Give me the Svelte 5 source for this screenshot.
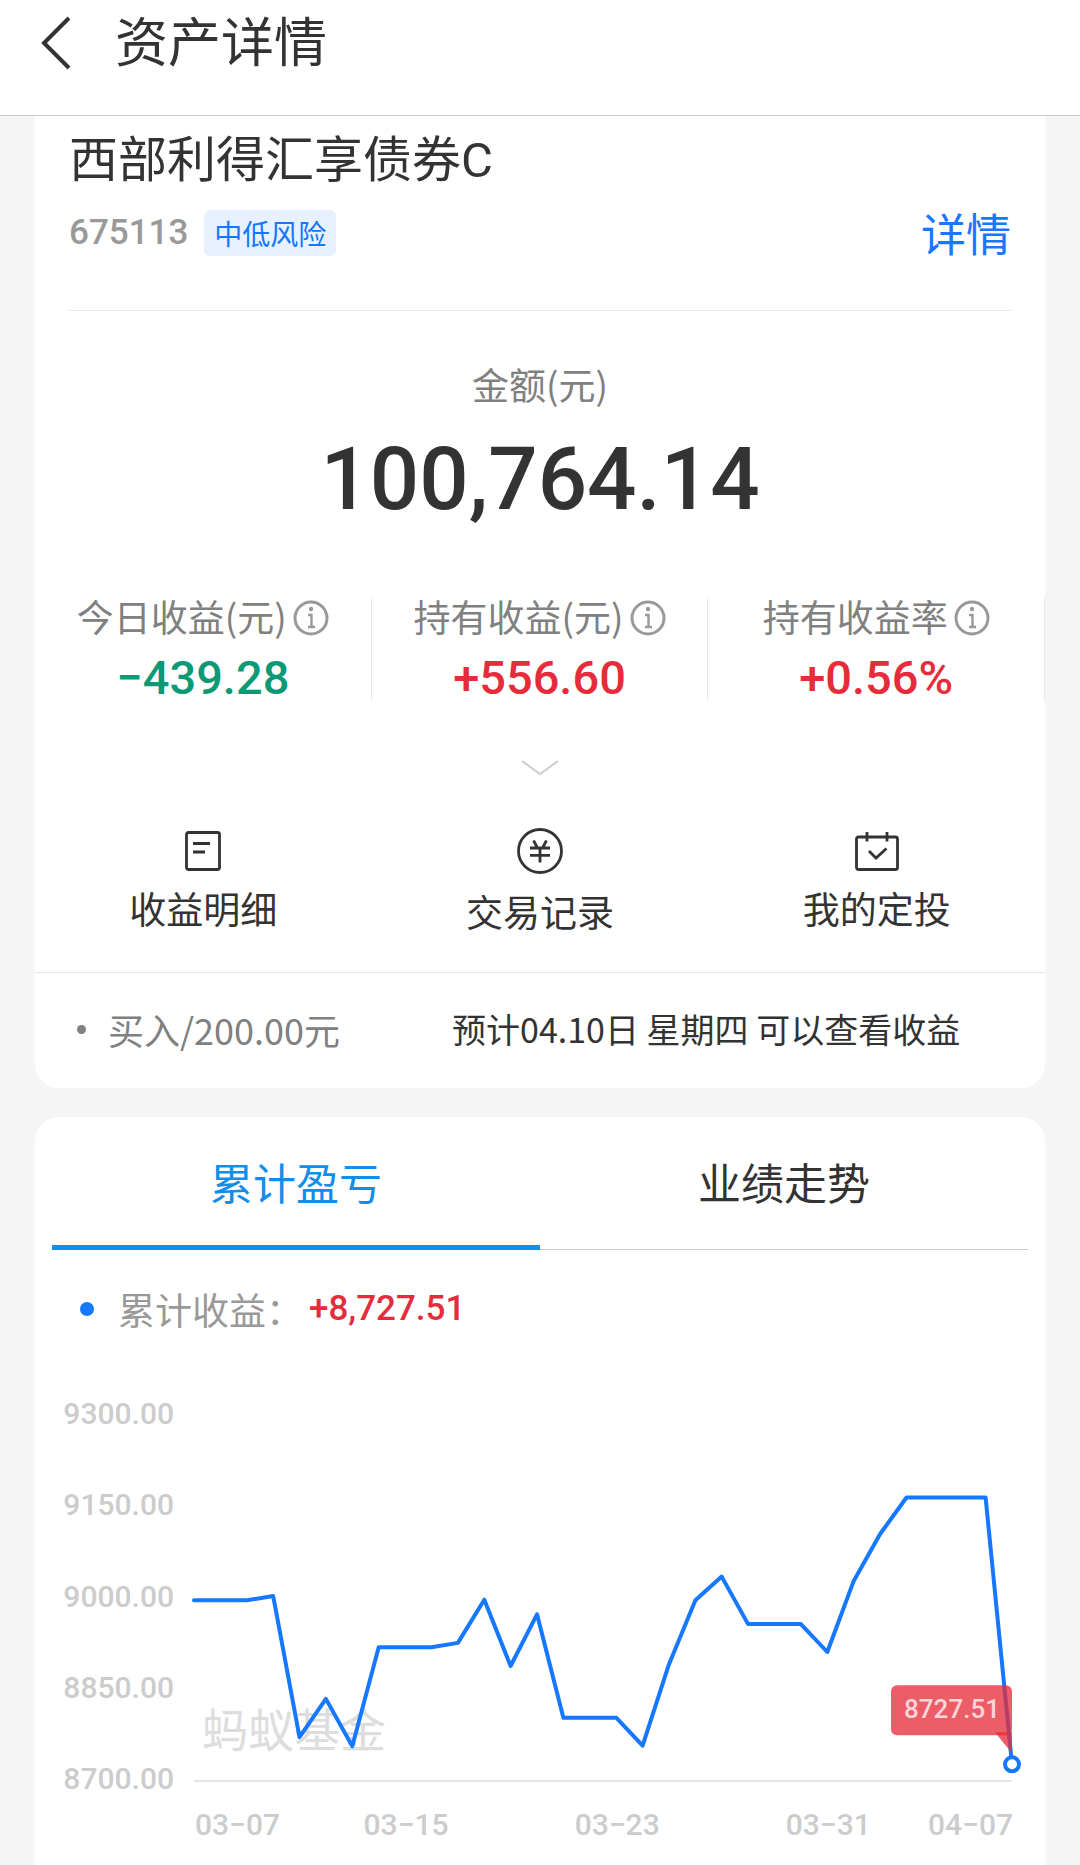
<script lang="ts">
  type Stat = { label: string; value: string; tone: "up" | "down" };

  const fund = { name: "西部利得汇享债券C", code: "675113", risk: "中低风险" };

  const stats: Stat[] = [
    { label: "今日收益(元)", value: "−439.28", tone: "down" },
    { label: "持有收益(元)", value: "+556.60", tone: "up" },
    { label: "持有收益率", value: "+0.56%", tone: "up" },
  ];

  const tabs = ["累计盈亏", "业绩走势"];
  let activeTab = $state(0);

  // one value per day, 03-07 to 04-07
  const series = [
    8997, 8997, 8997, 9004, 8772, 8835, 8757, 8920, 8920, 8920, 8927,
    8998, 8889, 8974, 8804, 8804, 8804, 8758, 8892, 8997, 9036, 8958,
    8958, 8958, 8912, 9029, 9106, 9166, 9166, 9166, 9166, 8727.51,
  ];
  const yTicks = [9300, 9150, 9000, 8850, 8700];
  const xTicks = [
    { day: 0, text: "03−07" },
    { day: 8, text: "03−15" },
    { day: 16, text: "03−23" },
    { day: 24, text: "03−31" },
    { day: 31, text: "04−07" },
  ];

  // plot area inside the 1010 x 485 view box
  const left = 159, right = 977, top = 36, bottom = 401;
  const min = 8700, max = 9300;

  const last = series.length - 1;
  const px = (i: number) => left + (i / last) * (right - left);
  const py = (v: number) => bottom - ((v - min) / (max - min)) * (bottom - top);
  const line = series.map((v, i) => `${px(i).toFixed(1)},${py(v).toFixed(1)}`).join(" ");
  const endX = px(last);
  const endY = py(series[last]);

  function anchor(day: number) {
    if (day === 0) return "start";
    return day === last ? "end" : "middle";
  }
</script>

<div class="page">
  <header class="navbar">
    <button class="back" aria-label="返回">
      <svg width="32" height="54" viewBox="0 0 32 54" fill="none" stroke="#333" stroke-width="4">
        <path d="M29 2 4 27l25 25" />
      </svg>
    </button>
    <h1>资产详情</h1>
  </header>

  <section class="card summary">
    <div class="fund">
      <h2>{fund.name}</h2>
      <div class="meta">
        <span class="code">{fund.code}</span>
        <span class="risk">{fund.risk}</span>
        <a class="detail" href="#detail">详情</a>
      </div>
    </div>

    <div class="amount">
      <div class="amount-label">金额(元)</div>
      <div class="amount-value">100,764.14</div>
    </div>

    <div class="stats">
      {#each stats as stat}
        <div class="stat">
          <div class="stat-label">
            <span>{stat.label}</span>
            <button class="info" aria-label="{stat.label}说明">
              <svg width="36" height="36" viewBox="0 0 36 36" fill="none" stroke="#999" stroke-width="2.4">
                <circle cx="18" cy="18" r="16" stroke-width="3" />
                <circle cx="18" cy="9" r="2.2" fill="#999" stroke="none" />
                <path d="M15 15h3.5v12M15 27h7" />
              </svg>
            </button>
          </div>
          <div class="stat-value {stat.tone}">{stat.value}</div>
        </div>
      {/each}
    </div>

    <button class="expand" aria-label="展开">
      <svg width="38" height="17" viewBox="0 0 38 17" fill="none" stroke="#ccc" stroke-width="2">
        <path d="m1 2 18 13L37 2" />
      </svg>
    </button>

    <nav class="actions">
      <a href="#income">
        <svg width="36" height="40" viewBox="0 0 36 40" fill="none" stroke="#333" stroke-width="2.8">
          <rect x="1.5" y="1.5" width="33" height="37" rx="2" />
          <path d="M8 12.5h17M8 21h12" />
        </svg>
        <span>收益明细</span>
      </a>
      <a href="#trades">
        <svg width="46" height="46" viewBox="0 0 46 46" fill="none" stroke="#333" stroke-width="2.8">
          <circle cx="23" cy="23" r="21.5" />
          <path d="m16.5 12.5 4 7.5M29.5 12.5l-4 7.5M13 20h20M13 27.3h20M23 20v14.5" />
        </svg>
        <span>交易记录</span>
      </a>
      <a href="#plan">
        <svg width="44" height="40" viewBox="0 0 44 40" fill="none" stroke="#333" stroke-width="2.8">
          <rect x="1.5" y="6" width="41" height="32.5" rx="2" />
          <path d="M12 1v9.5M32 1v9.5" />
          <path d="m14 20 7 7 10.5-9.5" />
        </svg>
        <span>我的定投</span>
      </a>
    </nav>

    <div class="pending">
      <span class="pending-dot"></span>
      <span class="pending-order">买入/200.00元</span>
      <span class="pending-note">预计04.10日 星期四 可以查看收益</span>
    </div>
  </section>

  <section class="card trend">
    <div class="tabs" role="tablist">
      {#each tabs as tab, i}
        <button
          role="tab"
          class:active={activeTab === i}
          aria-selected={activeTab === i}
          onclick={() => (activeTab = i)}
        >{tab}</button>
      {/each}
    </div>

    <div class="legend">
      <span class="legend-dot"></span>
      <span class="legend-label">累计收益：</span>
      <span class="legend-value">+8,727.51</span>
    </div>

    <svg class="chart" viewBox="0 0 1010 485" role="img" aria-label="累计收益走势">
      <text class="watermark" x="167" y="367">蚂蚁基金</text>

      {#each yTicks as tick}
        <text class="tick" x="139" y={py(tick) + 8} text-anchor="end">{tick.toFixed(2)}</text>
      {/each}
      {#each xTicks as tick}
        <text class="tick" x={px(tick.day) + 1} y="455" text-anchor={anchor(tick.day)}>{tick.text}</text>
      {/each}

      <line class="axis" x1={left} y1={bottom} x2={right} y2={bottom} />
      <polyline class="line" points={line} />

      <g class="tip">
        <rect x={endX - 121} y={endY - 79} width="121" height="50" rx="6" />
        <path d="M{endX - 17} {endY - 32}h17v21z" />
        <text x={endX - 60} y={endY - 46} text-anchor="middle">{series[last]}</text>
      </g>
      <circle class="marker" cx={endX} cy={endY} r="7" />
    </svg>
  </section>
</div>

<style>
  :global(body) {
    margin: 0;
    background: #f5f5f5;
  }

  .page {
    --text: #333;
    --muted: #808080;
    --blue: #1677ff;
    --tab-blue: #108ee9;
    --red: #e62c3b;
    --green: #0e9976;
    --rule: #e8e8e8;
    --font-num: Roboto, "Noto Sans CJK SC", sans-serif;

    display: flex;
    flex-direction: column;
    min-height: 100vh;
    background: #f5f5f5;
    color: var(--text);
    font-family: "Noto Sans CJK SC", sans-serif;
  }

  h1, h2 { margin: 0; font-weight: 400; }

  button {
    padding: 0;
    border: 0;
    background: none;
    color: inherit;
    font: inherit;
    cursor: pointer;
  }

  a { color: inherit; text-decoration: none; }
  svg { display: block; }

  /* navbar */
  .navbar {
    display: flex;
    align-items: center;
    gap: 43px;
    padding: 8px 40px 45px;
    border-bottom: 1px solid #c8c8c8;
    background: #fff;
  }
  .navbar h1 { font-size: 53px; line-height: 62px; }
  .back { padding-top: 8px; }

  .card { margin: 0 35px; background: #fff; }

  /* fund name */
  .summary { border-radius: 0 0 24px 24px; }
  .fund {
    margin: 0 34px;
    padding: 15px 0 54px;
    border-bottom: 1px solid var(--rule);
  }
  .fund h2 { font-family: var(--font-num); font-size: 49px; line-height: 60px; }
  .meta {
    display: flex;
    align-items: center;
    margin-top: 19px;
    line-height: 46px;
  }
  .code { color: #999; font-family: var(--font-num); font-size: 35px; font-weight: 500; }
  .risk {
    margin-left: 16px;
    padding: 0 10px;
    border-radius: 6px;
    background: #e7f1ff;
    color: var(--blue);
    font-size: 28px;
  }
  .detail { margin-left: auto; color: var(--blue); font-size: 45px; }

  /* amount */
  .amount { padding-top: 51px; text-align: center; }
  .amount-label { color: var(--muted); font-size: 37px; line-height: 44px; }
  .amount-value {
    margin-top: 23px;
    font-family: var(--font-num);
    font-size: 87px;
    font-weight: 500;
    line-height: 100px;
  }

  .stats {
    display: grid;
    grid-template-columns: repeat(3, 1fr);
    margin-top: 69px;
  }
  .stat { border-right: 1px solid var(--rule); }
  .stat-label {
    display: flex;
    justify-content: center;
    align-items: center;
    gap: 6px;
    height: 36px;
    color: var(--muted);
    font-size: 37px;
    line-height: 36px;
  }
  .info { padding-top: 4px; }
  .stat-value {
    margin-top: 21px;
    font-family: var(--font-num);
    font-size: 47px;
    font-weight: 500;
    line-height: 46px;
    text-align: center;
  }
  .up { color: var(--red); }
  .down { color: var(--green); }

  .expand { display: block; margin: 58px auto 0; }

  /* shortcuts */
  .actions {
    display: grid;
    grid-template-columns: repeat(3, 1fr);
    align-items: center;
    padding: 52px 0 39px;
    border-bottom: 1px solid var(--rule);
  }
  .actions a {
    display: flex;
    flex-direction: column;
    align-items: center;
    gap: 15px;
    font-size: 37px;
    line-height: 44px;
  }

  .pending {
    display: flex;
    align-items: center;
    padding: 32px 42px 35px;
    line-height: 48px;
    white-space: nowrap;
  }
  .pending-dot { width: 9px; height: 9px; border-radius: 50%; background: var(--muted); }
  .pending-order { margin-left: 22px; color: var(--muted); font-size: 36px; }
  .pending-note { margin-left: 112px; font-size: 34px; }

  /* trend card */
  .trend {
    flex: 1;
    margin-top: 29px;
    border-radius: 24px 24px 0 0;
  }
  .tabs {
    display: grid;
    grid-template-columns: 1fr 1fr;
    margin: 0 17px;
    border-bottom: 1px solid #ccc;
  }
  .tabs button {
    margin-bottom: -1px;
    padding: 34px 0;
    border-bottom: 5px solid transparent;
    font-size: 43px;
    line-height: 60px;
  }
  .tabs button.active { border-color: var(--tab-blue); color: var(--tab-blue); }

  .legend {
    display: flex;
    align-items: center;
    margin: 37px 45px 0;
    line-height: 44px;
  }
  .legend-dot { width: 14px; height: 14px; border-radius: 50%; background: var(--blue); }
  .legend-label { margin-left: 24px; color: #999; font-size: 37px; }
  .legend-value {
    margin-left: 6px;
    color: var(--red);
    font-family: var(--font-num);
    font-size: 35px;
    font-weight: 500;
  }

  /* chart */
  .chart { width: 100%; margin-top: 49px; }
  .tick { fill: #ccc; font-family: var(--font-num); font-size: 30px; font-weight: 500; }
  .watermark { fill: #ddd; font-size: 46px; }
  .axis { stroke: #e4e4e4; stroke-width: 2; }
  .line {
    fill: none;
    stroke: var(--blue);
    stroke-width: 4;
    stroke-linejoin: round;
    stroke-linecap: round;
  }
  .tip rect, .tip path { fill: var(--red); fill-opacity: 0.77; }
  .tip text { fill: #fbd5d8; font-family: var(--font-num); font-size: 26px; font-weight: 500; }
  .marker { fill: #fff; stroke: var(--blue); stroke-width: 4; }
</style>
